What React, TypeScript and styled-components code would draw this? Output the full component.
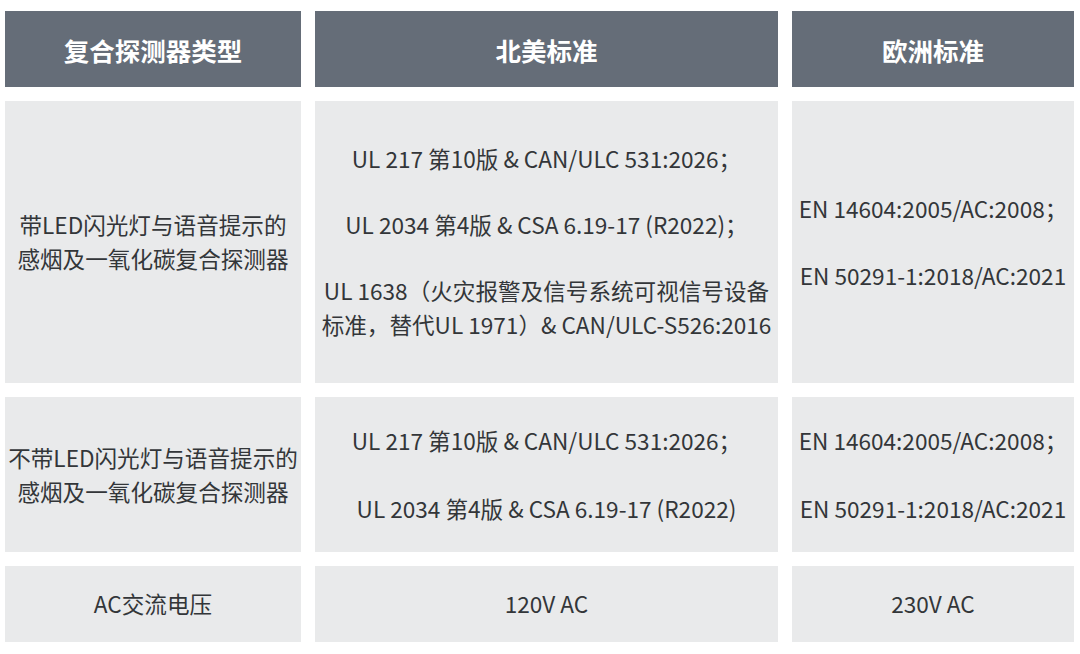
import React from "react";
import styled, { createGlobalStyle } from "styled-components";

const Global = createGlobalStyle`
  html, body { margin: 0; padding: 0; background: #ffffff; }
  body { font-family: "Noto Sans CJK SC", "Noto Sans", sans-serif; }
`;

const Table = styled.div`
  display: grid;
  grid-template-columns: 296px 463px 282px;
  grid-template-rows: 76px 282px 155px 76px;
  gap: 14px;
  padding: 11px 6px 0 5px;
  width: 1080px;
  box-sizing: border-box;
`;

const HeadCell = styled.div`
  background: #656d78;
  color: #ffffff;
  font-weight: 700;
  font-size: 25.5px;
  display: flex;
  align-items: center;
  justify-content: center;
`;

const Cell = styled.div`
  background: #e9eaeb;
  color: #333639;
  font-size: 22.6px;
  line-height: 34px;
  display: flex;
  flex-direction: column;
  align-items: center;
  justify-content: center;
  text-align: center;
  gap: ${(p: { $gap?: number }) => p.$gap ?? 33}px;
`;

const Para = styled.p`
  margin: 0;
  white-space: nowrap;
`;

export default function App() {
  return (
    <>
      <Global />
      <Table>
        <HeadCell>复合探测器类型</HeadCell>
        <HeadCell>北美标准</HeadCell>
        <HeadCell>欧洲标准</HeadCell>

        <Cell>
          <Para>
            带LED闪光灯与语音提示的
            <br />
            感烟及一氧化碳复合探测器
          </Para>
        </Cell>
        <Cell $gap={32}>
          <Para>UL 217 第10版 &amp; CAN/ULC 531:2026；</Para>
          <Para>UL 2034 第4版 &amp; CSA 6.19-17 (R2022)；</Para>
          <Para>
            UL 1638（火灾报警及信号系统可视信号设备
            <br />
            标准，替代UL 1971）&amp; CAN/ULC-S526:2016
          </Para>
        </Cell>
        <Cell>
          <Para>EN 14604:2005/AC:2008；</Para>
          <Para>EN 50291-1:2018/AC:2021</Para>
        </Cell>

        <Cell>
          <Para>
            不带LED闪光灯与语音提示的
            <br />
            感烟及一氧化碳复合探测器
          </Para>
        </Cell>
        <Cell $gap={34}>
          <Para>UL 217 第10版 &amp; CAN/ULC 531:2026；</Para>
          <Para>UL 2034 第4版 &amp; CSA 6.19-17 (R2022)</Para>
        </Cell>
        <Cell $gap={34}>
          <Para>EN 14604:2005/AC:2008；</Para>
          <Para>EN 50291-1:2018/AC:2021</Para>
        </Cell>

        <Cell>
          <Para>AC交流电压</Para>
        </Cell>
        <Cell>
          <Para>120V AC</Para>
        </Cell>
        <Cell>
          <Para>230V AC</Para>
        </Cell>
      </Table>
    </>
  );
}
